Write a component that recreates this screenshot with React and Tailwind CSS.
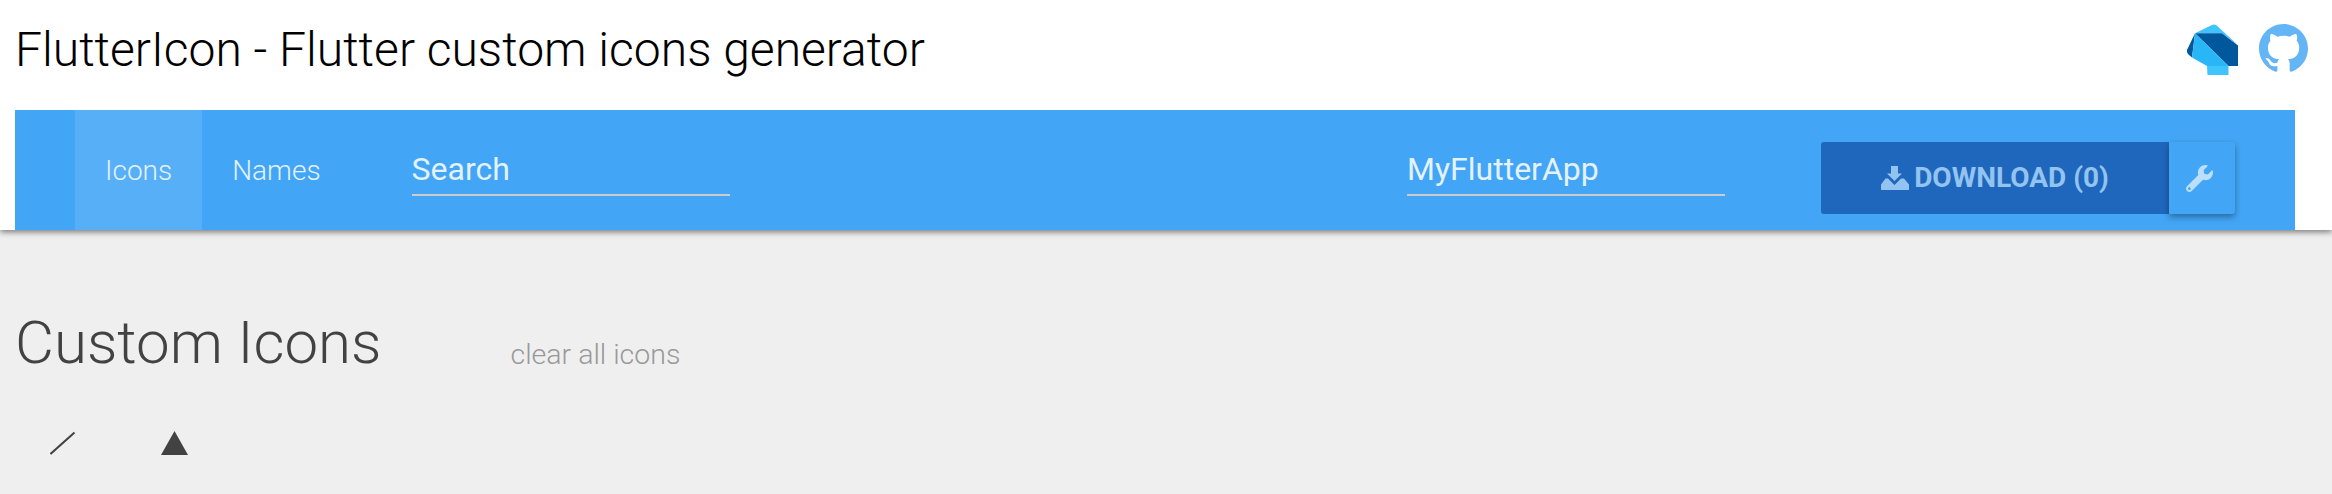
import { FaWrench } from "react-icons/fa"

function DartLogo() {
  return (
    <svg width="52" height="52" viewBox="86 24 52 52" className="block">
      <path d="M95 33.3 L112 25 Q114 24 116 25 L138 45 L122 33.3 Z" fill="#40c4ff" />
      <path d="M95 33.3 L122 33.3 L138 45.5 L138 66 L128.5 66 Z" fill="#01579b" />
      <path d="M95 33.3 L87 50 Q86.5 52 88 54 L92 57.5 Z" fill="#01579b" />
      <path d="M95 33.3 L128.5 66 L107 66 L92 57.5 Z" fill="#29b6f6" />
      <path d="M107 66 L128.5 66 L128.5 75 L107.5 75 Z" fill="#40c4ff" />
    </svg>
  )
}

function GithubMark() {
  return (
    <svg width="49" height="49" viewBox="0 0 16 16" fill="#64b5f6" className="block">
      <path d="M8 0C3.58 0 0 3.58 0 8c0 3.54 2.29 6.53 5.47 7.59.4.07.55-.17.55-.38 0-.19-.01-.82-.01-1.49-2.01.37-2.53-.49-2.69-.94-.09-.23-.48-.94-.82-1.13-.28-.15-.68-.52-.01-.53.63-.01 1.08.58 1.23.82.72 1.21 1.87.87 2.33.66.07-.52.28-.87.51-1.07-1.78-.2-3.64-.89-3.64-3.95 0-.87.31-1.59.82-2.15-.08-.2-.36-1.02.08-2.12 0 0 .67-.21 2.2.82.64-.18 1.32-.27 2-.27.68 0 1.36.09 2 .27 1.53-1.04 2.2-.82 2.2-.82.44 1.1.16 1.92.08 2.12.51.56.82 1.27.82 2.15 0 3.07-1.87 3.75-3.65 3.95.29.25.54.73.54 1.48 0 1.07-.01 1.93-.01 2.2 0 .21.15.46.55.38A8.013 8.013 0 0016 8c0-4.42-3.58-8-8-8z" />
    </svg>
  )
}

function DownloadIcon() {
  return (
    <svg width="28" height="24" viewBox="0 0 28 24" fill="currentColor" className="block">
      <path d="M10 0 H17 V7.5 H21 L13.5 15 L6 7.5 H10 Z" />
      <path d="M4.5 12.5 H7 L13.5 19 L20 12.5 H23 L28 18.5 V23.5 Q28 24 27 24 H1 Q0 24 0 23.5 V18.5 Z" />
    </svg>
  )
}

function TextField({ value }) {
  return (
    <div className="w-[318px] h-[86px] border-b-2 border-[#cccccc] flex items-end pb-[3px] text-[32px] leading-[44px] text-[#e3f2fd]">
      {value}
    </div>
  )
}

export default function App() {
  return (
    <div className="min-h-[494px] bg-[#efefef] font-['Roboto',sans-serif] overflow-hidden">
      <div className="bg-white relative z-10 shadow-[0_2px_6px_rgba(0,0,0,0.5)]">
        <div className="h-[110px] flex justify-between pl-[15px] pr-[24px]">
          <h1 className="text-[48px] font-light text-black leading-[100px]">
            FlutterIcon - Flutter custom icons generator
          </h1>
          <div className="flex items-start gap-[21px] pt-[24px]">
            <DartLogo />
            <GithubMark />
          </div>
        </div>
        <nav className="ml-[15px] mr-[37px] h-[120px] bg-[#42a5f5] flex items-start pl-[60px] pr-[60px]">
          <a className="h-[120px] px-[30px] pt-[2px] flex items-center bg-[#57aff7] text-[28px] font-light text-[#e3f2fd]">Icons</a>
          <a className="h-[120px] px-[30px] pt-[2px] flex items-center text-[28px] font-light text-[#e3f2fd]">Names</a>
          <div className="ml-[61px]">
            <TextField value="Search" />
          </div>
          <div className="ml-auto">
            <TextField value="MyFlutterApp" />
          </div>
          <div className="ml-[96px] mt-[32px] flex h-[72px]">
            <button className="w-[348px] h-[72px] rounded-l-[3px] bg-[#1f67bc] flex items-center justify-center gap-[5px] text-[28px] font-bold text-[#93c3f0]">
              <DownloadIcon />
              DOWNLOAD (0)
            </button>
            <button className="w-[66px] h-[72px] rounded-r-[3px] bg-[#42a5f5] pr-[6px] flex items-center justify-center text-[#bbdefb] shadow-[0_3px_6px_rgba(0,0,0,0.35)]">
              <FaWrench className="text-[27px]" />
            </button>
          </div>
        </nav>
      </div>
      <div className="pl-[15px] pt-[71px]">
        <div className="flex items-baseline">
          <h2 className="text-[60px] font-light text-[#424242] leading-[84px]">Custom Icons</h2>
          <a className="ml-[129px] text-[28.5px] font-light text-[#999999] translate-y-[1px]">clear all icons</a>
        </div>
        <div className="flex items-center mt-[46px] pl-[35px] gap-[83px]">
          <svg width="28" height="24" viewBox="0 0 28 24" className="block">
            <path d="M0.5 23 L24.5 1.5" stroke="#424242" strokeWidth="2" fill="none" />
          </svg>
          <svg width="28" height="24" viewBox="0 0 28 24" className="block">
            <path d="M13.5 0 L27 24 L0 24 Z" fill="#424242" />
          </svg>
        </div>
      </div>
    </div>
  )
}
